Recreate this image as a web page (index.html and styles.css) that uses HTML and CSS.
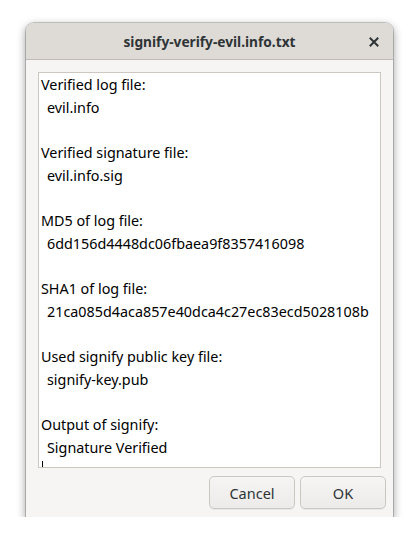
FILE: index.html
```html
<!DOCTYPE html>
<html>
<head>
<meta charset="utf-8">
<link rel="stylesheet" href="styles.css">
</head>
<body>
<div class="window">
  <div class="titlebar">
    <span class="title">signify-verify-evil.info.txt</span>
    <span class="close">
      <svg width="10" height="10" viewBox="0 0 10 10"><path d="M1.5 1.5 L8.5 8.5 M8.5 1.5 L1.5 8.5" stroke="#2e3436" stroke-width="2" stroke-linecap="square"/></svg>
    </span>
  </div>
  <div class="content">
    <div class="textview">
      <div class="line">Verified log file:</div>
      <div class="line ind">evil.info</div>
      <div class="line">&nbsp;</div>
      <div class="line">Verified signature file:</div>
      <div class="line ind">evil.info.sig</div>
      <div class="line">&nbsp;</div>
      <div class="line">MD5 of log file:</div>
      <div class="line ind">6dd156d4448dc06fbaea9f8357416098</div>
      <div class="line">&nbsp;</div>
      <div class="line">SHA1 of log file:</div>
      <div class="line ind">21ca085d4aca857e40dca4c27ec83ecd5028108b</div>
      <div class="line">&nbsp;</div>
      <div class="line">Used signify public key file:</div>
      <div class="line ind">signify-key.pub</div>
      <div class="line">&nbsp;</div>
      <div class="line">Output of signify:</div>
      <div class="line ind">Signature Verified</div>
      <div class="cursor-line"><span class="cursor"></span></div>
    </div>
    <div class="buttons">
      <button class="btn">Cancel</button>
      <button class="btn">OK</button>
    </div>
  </div>
</div>
</body>
</html>
```
FILE: styles.css
```css
html, body {
  margin: 0;
  padding: 0;
  background: #ffffff;
}
body {
  font-family: "Noto Sans", "DejaVu Sans", sans-serif;
  color: #2e3436;
  padding: 23px 0 0 26px;
}
.window {
  width: 367px;
  height: 494px;
  background: #f6f5f4;
  border-radius: 8px 8px 0 0;
  box-shadow: 0 3px 9px 1px rgba(0,0,0,0.35), 0 0 0 1px rgba(0,0,0,0.18);
  display: flex;
  flex-direction: column;
  overflow: hidden;
}
.titlebar {
  height: 36px;
  flex: none;
  background: #dedbd7;
  border-bottom: 1px solid #c0bbb6;
  display: flex;
  align-items: center;
  justify-content: center;
  position: relative;
}
.title {
  font-weight: bold;
  font-size: 13.7px;
  color: #2e3436;
}
.close {
  position: absolute;
  right: 14px;
  top: 14px;
  width: 10px;
  height: 10px;
  display: flex;
}
.content {
  flex: 1;
  display: flex;
  flex-direction: column;
  padding: 12px 12px 8px 12px;
}
.textview {
  height: 396px;
  box-sizing: border-box;
  border: 1px solid #cdc7c2;
  background: #ffffff;
  padding: 1px 0 0 2px;
  font-size: 14.35px;
  color: #000000;
  overflow: hidden;
}
.line {
  height: 22.67px;
  line-height: 22.67px;
  white-space: pre;
}
.ind {
  padding-left: 6px;
}
.cursor-line {
  height: 12px;
  padding-top: 2px;
}
.cursor {
  display: block;
  width: 1px;
  height: 10px;
  background: #000;
  margin-left: 1px;
}
.buttons {
  display: flex;
  justify-content: flex-end;
  gap: 5px;
  margin-top: 8px;
  margin-right: -5px;
}
.btn {
  width: 86px;
  height: 33px;
  box-sizing: border-box;
  border: 1px solid #cdc7c2;
  border-radius: 5px;
  background: linear-gradient(#f6f5f4, #edebe9);
  box-shadow: 0 1px rgba(0,0,0,0.05);
  font-family: "Noto Sans", "DejaVu Sans", sans-serif;
  font-size: 14.5px;
  color: #2e3436;
  padding: 0;
}
```
